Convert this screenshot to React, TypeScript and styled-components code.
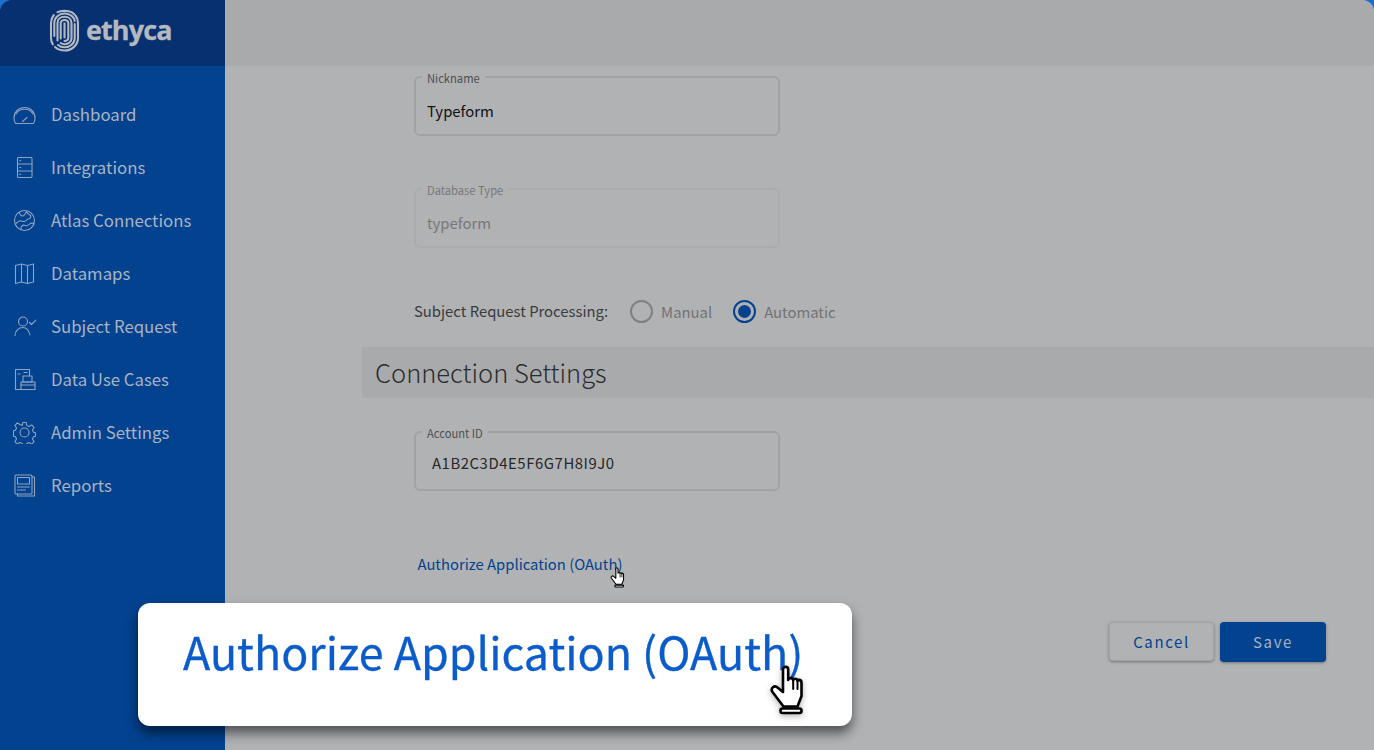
import React from 'react';
import styled, { createGlobalStyle } from 'styled-components';

const GlobalStyle = createGlobalStyle`
  html, body { margin: 0; padding: 0; background: #1a6fd0; }
  * { box-sizing: border-box; }
  body { font-family: "Noto Sans CJK SC", "Noto Sans", sans-serif; }
`;

const Screen = styled.div`
  position: relative;
  display: flex;
  width: 1374px;
  height: 750px;
  overflow: hidden;
  border-radius: 12px 12px 0 0;
  background: #b1b2b4;
`;

const Sidebar = styled.aside`
  display: flex;
  flex-direction: column;
  flex: 0 0 225px;
  background: #03428f;
`;

const Brand = styled.div`
  display: flex;
  align-items: center;
  gap: 6px;
  height: 66px;
  padding: 0 0 5px 49px;
  background: #06306f;
`;

const BrandName = styled.span`
  padding-bottom: 3px;
  font-family: "Open Sans", sans-serif;
  font-size: 27px;
  font-weight: 700;
  letter-spacing: -0.9px;
  -webkit-text-stroke: 0.3px #b4b8c0;
  color: #b4b8c0;
`;

const Nav = styled.nav`
  display: flex;
  flex-direction: column;
  padding-top: 22px;
`;

const NavItem = styled.div`
  display: flex;
  align-items: center;
  gap: 15px;
  height: 53px;
  padding: 0 0 2px 13px;
  font-size: 16.8px;
  color: #a9b3c2;
`;

const NavIcon = styled.svg`
  flex: 0 0 23px;
  width: 23px;
  height: 23px;
  margin-top: 2px;
  fill: none;
  stroke: #8fa3bf;
  stroke-width: 1.1;
  stroke-linecap: round;
  stroke-linejoin: round;
`;

const Main = styled.main`
  display: flex;
  flex-direction: column;
  flex: 1;
  min-width: 0;
`;

const TopBar = styled.header`
  flex: 0 0 66px;
  background: #a9aaac;
`;

const Form = styled.div`
  display: flex;
  flex-direction: column;
  padding-top: 10px;
`;

const Field = styled.div<{ $disabled?: boolean; $top: number }>`
  position: relative;
  display: flex;
  align-items: center;
  width: 366px;
  height: 60px;
  margin: ${(p) => p.$top}px 0 0 189px;
  padding: 8px 11px 0 11px;
  border: 2px solid ${(p) => (p.$disabled ? '#abacae' : '#a1a2a4')};
  border-radius: 6px;
  font-size: 14.9px;
  color: ${(p) => (p.$disabled ? '#77787a' : '#101114')};
`;

const FieldLegend = styled.span<{ $disabled?: boolean }>`
  position: absolute;
  top: -7px;
  left: 6px;
  padding: 0 5px;
  background: #b1b2b4;
  font-size: 11.2px;
  line-height: 14px;
  color: ${(p) => (p.$disabled ? '#77787a' : '#4e4f52')};
`;

const AccountValue = styled.span`
  padding-left: 5px;
  padding-bottom: 5px;
  letter-spacing: 0.55px;
  color: #26272a;
`;

const RadioRow = styled.div`
  display: flex;
  align-items: center;
  height: 24px;
  margin: 51px 0 0 189px;
  font-size: 14.85px;
  color: #3a3b3e;
`;

const RadioLabel = styled.span`
  padding-bottom: 2px;
`;

const RadioOption = styled.label<{ $first?: boolean }>`
  display: flex;
  align-items: center;
  gap: 8px;
  margin-left: ${(p) => (p.$first ? 22 : 21)}px;
  color: #717275;
`;

const RadioDot = styled.span<{ $checked?: boolean }>`
  display: flex;
  align-items: center;
  justify-content: center;
  width: 23px;
  height: 23px;
  border: 2px solid ${(p) => (p.$checked ? '#03428f' : '#7f8082')};
  border-radius: 50%;

  &::after {
    content: '';
    display: ${(p) => (p.$checked ? 'block' : 'none')};
    width: 13px;
    height: 13px;
    border-radius: 50%;
    background: #03428f;
  }
`;

const SectionBar = styled.div`
  display: flex;
  align-items: center;
  height: 51px;
  margin: 24px 0 0 137px;
  padding: 0 0 3px 13px;
  background: #a9aaac;
`;

const SectionTitle = styled.h2`
  margin: 0;
  font-size: 25.5px;
  font-weight: 300;
  color: #2b2c2f;
`;

const OAuthLink = styled.div`
  position: relative;
  align-self: flex-start;
  height: 20px;
  margin: 63px 0 0 192.5px;
  font-size: 14.8px;
  line-height: 19px;
  color: #03428f;
`;

const SmallCursor = styled.span`
  position: absolute;
  top: 13px;
  right: -3px;
  display: flex;
`;

const Actions = styled.div`
  display: flex;
  justify-content: flex-end;
  gap: 6px;
  margin-top: 48px;
  padding-right: 48px;
`;

const Button = styled.button<{ $primary?: boolean }>`
  width: ${(p) => (p.$primary ? 106 : 105)}px;
  height: ${(p) => (p.$primary ? 40 : 39)}px;
  padding-bottom: ${(p) => (p.$primary ? 3 : 1)}px;
  border: ${(p) => (p.$primary ? 'none' : '1px solid #a3a4a6')};
  border-radius: 4px;
  background: ${(p) => (p.$primary ? '#03428f' : '#b1b2b4')};
  box-shadow: 0 1px 3px rgba(0, 0, 0, 0.35);
  font-family: inherit;
  font-size: 15px;
  letter-spacing: 1.6px;
  color: ${(p) => (p.$primary ? '#a9b3c2' : '#03428f')};
`;

const Callout = styled.div`
  position: absolute;
  left: 138px;
  top: 603px;
  display: flex;
  align-items: center;
  width: 714px;
  height: 123px;
  padding: 0 0 27px 45px;
  border-radius: 12px;
  background: #ffffff;
  box-shadow: 0 7px 12px rgba(0, 0, 0, 0.55);
`;

const CalloutText = styled.span`
  font-size: 44.8px;
  line-height: 60px;
  white-space: nowrap;
  -webkit-text-stroke: 0.3px #0b5ccb;
  color: #0b5ccb;
  filter: blur(0.6px);
`;

const CalloutCursor = styled.span`
  position: absolute;
  left: 631px;
  top: 62px;
  display: flex;
  filter: drop-shadow(0 2px 3px rgba(0, 0, 0, 0.3));
`;

const HandCursor = ({ size }: { size: number }) => (
  <svg width={size} height={size * 1.39} viewBox="0 0 36 50" fill="#fff" stroke="#000" strokeWidth="2.6" strokeLinejoin="round" strokeLinecap="round">
    <path d="M14 27V4.500a2.600 2.600 0 0 1 5.200 0V15c0-2.600 5-2.600 5 .4 0-2.400 4.300-2.400 4.300.6 0-2 4-1.600 4 1.400V31l-4 10.500H14.500L3.500 27c-2.500-3.500 2-7.500 5-4.500z" />
    <path d="M24.200 16v8M28.500 17v7" fill="none" strokeWidth="2" />
    <rect x="11.500" y="43.500" width="21" height="4.500" rx="2" />
  </svg>
);

const Logo = () => (
  <svg width="31" height="43" viewBox="0 0 30 43" fill="none" stroke="#b4b8c0" strokeWidth="2.1" strokeLinecap="round">
    <path d="M8 3.200C11 1.400 19 1.400 22 3.200 26 5.500 28.500 9 28.500 14V29C28.500 36 22.500 41.500 15 41.500 11 41.500 8 40.200 5.500 38" />
    <path d="M4.300 6C2.500 8.300 1.500 11 1.500 14V29C1.500 31.500 2.200 33.500 3.300 35.300" />
    <path d="M25.200 15V29C25.200 34.500 20.500 38.300 15 38.300 12.500 38.300 10.300 37.500 8.500 36" />
    <path d="M4.800 27V14C4.800 8.500 9.500 4.500 15 4.500 20.500 4.500 25.200 8.500 25.200 12" />
    <path d="M8 31.500V14C8 10.200 11 7.700 15 7.700 19 7.700 22 10.200 22 14V29C22 32.800 19 35.200 15 35.200 13.500 35.200 12.300 34.800 11.200 34" />
    <path d="M11.200 29.500V14C11.200 12.200 13 11 15 11 17 11 18.800 12.200 18.800 14V29C18.800 30.800 17 32 15 32" />
    <path d="M15 14.500V28.500" />
  </svg>
);

const icons: Record<string, React.ReactNode> = {
  dashboard: (
    <>
      <path d="M2.500 20.500C1.500 19 1 17 1 15 1 9 5.500 4.500 11.500 4.500S22 9 22 15c0 2-.5 4-1.500 5.500z" />
      <path d="M3 11C5 7.800 8 6.300 11.500 6.300S18 7.800 20 11" />
      <path d="M9.500 18.500l4.500-4M8 20.500h7" />
    </>
  ),
  integrations: (
    <>
      <rect x="4.500" y="1.500" width="14.500" height="20" rx="1" />
      <path d="M4.500 8h14.500M4.500 15h14.500M6.800 4.800h1M6.800 11.500h1M6.800 18.300h1" />
    </>
  ),
  atlas: (
    <>
      <circle cx="11.500" cy="11.500" r="10" />
      <path d="M6 3.500c1 2 1.500 3.500 3.500 3.500s2.500-2.500 4-4.500c.5 2 2 3 3.500 3.500 1.500 1 .5 4-1.500 4s-2 2.500-4 2.500-3-1-5-.5-2.500 2-3.500 2.500" />
      <path d="M8 20.500c-.5-2.500 1.500-5 3.500-4.200s3 1 4.500-.8 3.500-1.500 5-1" />
    </>
  ),
  datamaps: (
    <path d="M2.500 3.500l6-1.500 6 1.500 6-1.500V20l-6 1.500-6-1.500-6 1.500zM8.500 2v18M14.500 3.500v18" />
  ),
  subject: (
    <>
      <circle cx="10" cy="6.500" r="4.500" />
      <path d="M2 20.500c0-4.500 3.500-8 8-8s6 3 7 7.500M16.500 7.500l2 2L23 5" />
    </>
  ),
  usecases: (
    <>
      <path d="M10.500 21.500H2.500V1.500h14V8" />
      <rect x="10" y="8" width="9" height="6" />
      <rect x="8" y="14" width="14" height="7.500" />
      <path d="M5 6h2M11 4.500h3M8 17h14" />
    </>
  ),
  settings: (
    <>
      <circle cx="11.500" cy="11.500" r="4.500" />
      <path d="M9.800 1.500h3.400l.6 3 2.200 1 2.700-1.600 2.400 2.400-1.600 2.700 1 2.200 2 .6v3.400l-2 .6-1 2.200 1.600 2.700-2.400 2.400-2.700-1.600-2.200 1-.6 2H9.800l-.6-2-2.200-1-2.700 1.600-2.400-2.400 1.600-2.700-1-2.200-2-.6V9.800l2-.6 1-2.200-1.600-2.700 2.400-2.400L7 3.500l2.200 1z" />
    </>
  ),
  reports: (
    <>
      <path d="M19 3h2.500v19H4.500V20" />
      <rect x="2" y="1" width="17" height="19" rx="1" />
      <rect x="4.500" y="3.500" width="12" height="6.500" />
      <path d="M4.500 13h12M4.500 16h8" />
    </>
  ),
};

const navItems = [
  { key: 'dashboard', label: 'Dashboard' },
  { key: 'integrations', label: 'Integrations' },
  { key: 'atlas', label: 'Atlas Connections' },
  { key: 'datamaps', label: 'Datamaps' },
  { key: 'subject', label: 'Subject Request' },
  { key: 'usecases', label: 'Data Use Cases' },
  { key: 'settings', label: 'Admin Settings' },
  { key: 'reports', label: 'Reports' },
];

export default function App() {
  return (
    <>
      <GlobalStyle />
      <Screen>
        <Sidebar>
          <Brand>
            <Logo />
            <BrandName>ethyca</BrandName>
          </Brand>
          <Nav>
            {navItems.map((item) => (
              <NavItem key={item.key}>
                <NavIcon viewBox="0 0 23 23">{icons[item.key]}</NavIcon>
                {item.label}
              </NavItem>
            ))}
          </Nav>
        </Sidebar>
        <Main>
          <TopBar />
          <Form>
            <Field $top={0}>
              <FieldLegend>Nickname</FieldLegend>
              Typeform
            </Field>
            <Field $top={52} $disabled>
              <FieldLegend $disabled>Database Type</FieldLegend>
              typeform
            </Field>
            <RadioRow>
              <RadioLabel>Subject Request Processing:</RadioLabel>
              <RadioOption $first>
                <RadioDot />
                Manual
              </RadioOption>
              <RadioOption>
                <RadioDot $checked />
                Automatic
              </RadioOption>
            </RadioRow>
            <SectionBar>
              <SectionTitle>Connection Settings</SectionTitle>
            </SectionBar>
            <Field $top={33}>
              <FieldLegend>Account ID</FieldLegend>
              <AccountValue>A1B2C3D4E5F6G7H8I9J0</AccountValue>
            </Field>
            <OAuthLink>
              Authorize Application (OAuth)
              <SmallCursor>
                <HandCursor size={15} />
              </SmallCursor>
            </OAuthLink>
            <Actions>
              <Button>Cancel</Button>
              <Button $primary>Save</Button>
            </Actions>
          </Form>
        </Main>
        <Callout>
          <CalloutText>Authorize Application (OAuth)</CalloutText>
          <CalloutCursor>
            <HandCursor size={36} />
          </CalloutCursor>
        </Callout>
      </Screen>
    </>
  );
}
